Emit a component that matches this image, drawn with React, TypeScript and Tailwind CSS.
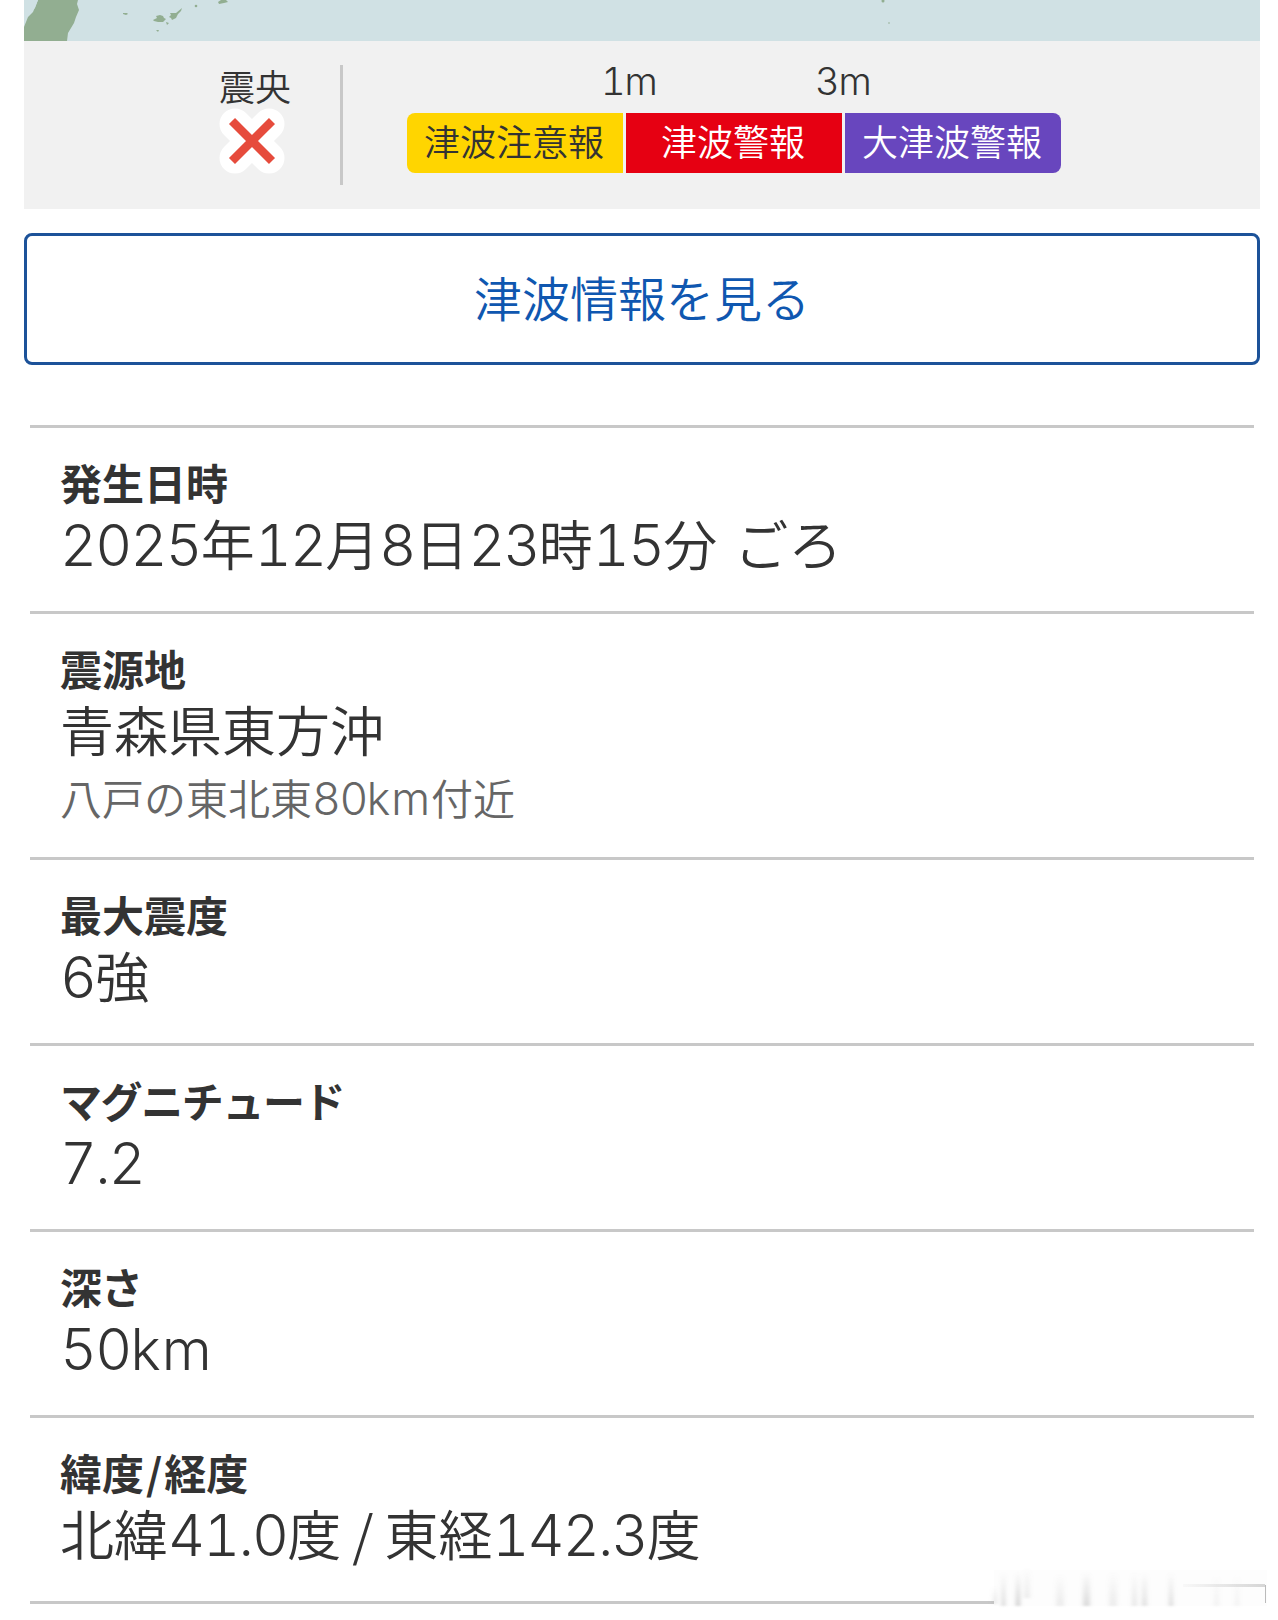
import { ReactNode } from 'react';

interface DetailRowProps {
    label: ReactNode;
    note?: string;
    children: ReactNode;
}

// Latin digits and units are set in a wider face than the kanji around them
function Num({ children }: { children: ReactNode }) {
    return (
        <span className="font-[Inter,'Noto_Sans_CJK_JP',sans-serif] text-[1.06em] leading-none font-[350] tracking-[-0.032em] tabular-nums">
            {children}
        </span>
    );
}

function Unit({ children }: { children: ReactNode }) {
    return (
        <span className="font-[Inter,'Noto_Sans_CJK_JP',sans-serif] text-[1.06em] leading-none font-[350] tracking-[0.02em]">
            {children}
        </span>
    );
}

function withNumerals(text: string) {
    return text.split(/([0-9.]+|km)/).map((part, i) => {
        if (i % 2 === 0) return part;
        return part === 'km' ? <Unit key={i}>{part}</Unit> : <Num key={i}>{part}</Num>;
    });
}

function DetailRow({ label, note, children }: DetailRowProps) {
    return (
        <div className={`border-b-3 border-[#c8c8c8] px-[30px] pt-[22px] ${note ? 'h-[246px]' : 'h-[186px]'}`}>
            <dt className="h-[63px] text-[42px] leading-[64px] font-bold">{label}</dt>
            <dd className="h-[60px] text-[54px] leading-[60px] font-[350] whitespace-pre">{children}</dd>
            {note && (
                <dd className="mt-2 h-[60px] text-[42px] leading-[60px] font-[350] text-[#666]">
                    {withNumerals(note)}
                </dd>
            )}
        </div>
    );
}

function MapStrip() {
    return (
        <svg className="block h-[41px] w-full" viewBox="0 0 1236 41">
            <rect width="1236" height="41" fill="#d0e1e4" />
            <path
                d="M0 0V27L4 17L9 12L14 0H54L53 4L55 10L52 17L50 23L47 28L44 33L43 41H0Z"
                fill="#92ae91"
            />
            <path d="M0 0H14L11 8L5 14L0 19Z" fill="#d0e1e4" />
            <g fill="#92ae91">
                <path d="M99 13l4 0l1 1l-2 1l-3-1z" />
                <path d="M129 20l4-2l-1-2l4-1l3 1l1 2l2 1l-3 3l-5 0l-4-1z" />
                <path d="M146 13l6 0l6-5l-1 3l-3 3l-2 4l-4 2l-1-2l-2-1l2-2z" />
                <path d="M142 22l3 1l-2 2z" />
                <path d="M132 30l3 0l-1 2z" />
                <circle cx="172" cy="6" r="1.3" />
                <path d="M194 2l3-2h5l2 2l-4 1l-5 1z" />
                <circle cx="859" cy="1" r="1.5" />
                <circle cx="865" cy="23" r="0.8" />
            </g>
        </svg>
    );
}

function EpicenterMark() {
    return (
        <svg className="mr-[7px] block size-[66px]" viewBox="0 0 66 66">
            <path d="M16 16L50 50M50 16L16 50" stroke="#fff" strokeWidth="31" strokeLinecap="round" />
            <path d="M13 13L53 53M53 13L13 53" stroke="#e64b3c" strokeWidth="8.5" />
        </svg>
    );
}

function Legend() {
    return (
        <div className="flex h-[168px] bg-[#f1f1f1] pt-6">
            <div className="ml-[194px] flex w-[74px] flex-col items-center text-[36px] leading-[40px] font-[350] whitespace-nowrap">
                <span className="mb-[3px]">震央</span>
                <EpicenterMark />
            </div>
            <div className="ml-[48px] h-[120px] w-[3px] bg-[#c8c8c8]" />
            <div className="ml-16 w-[654px] font-[350]">
                <div className="-mt-[3px] flex h-[51px] text-[36px] leading-[26px]">
                    <span className="ml-[194px] w-[57px]">
                        <Num>1</Num>
                        <Unit>m</Unit>
                    </span>
                    <span className="ml-[157px]">
                        <Num>3</Num>
                        <Unit>m</Unit>
                    </span>
                </div>
                <div className="flex gap-[3px] text-center text-[36px] leading-[54px]">
                    <div className="h-[60px] w-[216px] rounded-l-lg bg-[#ffd500] pr-0.5">津波注意報</div>
                    <div className="h-[60px] w-[216px] bg-[#e60012] pr-0.5 text-white">津波警報</div>
                    <div className="h-[60px] w-[216px] rounded-r-lg bg-[#6846be] pr-0.5 text-white">大津波警報</div>
                </div>
            </div>
        </div>
    );
}

// Faded stamp in the lower right corner
function Watermark() {
    return (
        <svg className="absolute top-[1560px] left-[988px] h-[50px] w-[282px]" viewBox="0 0 282 50">
            <defs>
                <linearGradient id="smear" x1="0" y1="0" x2="0" y2="1">
                    <stop offset="0" stopColor="#999" stopOpacity="0" />
                    <stop offset="1" stopColor="#999" stopOpacity="0.5" />
                </linearGradient>
                <linearGradient id="edge" x1="0" y1="0" x2="1" y2="0">
                    <stop offset="0" stopColor="#ccc" stopOpacity="0.1" />
                    <stop offset="1" stopColor="#ccc" stopOpacity="0.8" />
                </linearGradient>
                <filter id="soft" x="-20%" y="-20%" width="140%" height="140%">
                    <feGaussianBlur stdDeviation="2 1" />
                </filter>
            </defs>
            <rect x="6" y="10" width="273" height="36" fill="#fdfdfd" />
            <g fill="url(#smear)" filter="url(#soft)">
                <rect x="5" y="26" width="4" height="18" opacity="0.5" />
                <rect x="14" y="12" width="3" height="34" opacity="0.9" />
                <rect x="28" y="12" width="4" height="34" />
                <rect x="36" y="8" width="6" height="30" opacity="0.35" />
                <rect x="68" y="14" width="8" height="32" opacity="0.35" />
                <rect x="95" y="12" width="7" height="34" opacity="0.7" />
                <rect x="121" y="12" width="8" height="34" opacity="0.35" />
                <rect x="144" y="12" width="5" height="34" opacity="0.45" />
                <rect x="154" y="12" width="5" height="34" opacity="0.6" />
                <rect x="181" y="12" width="4" height="34" opacity="0.7" />
                <rect x="226" y="14" width="5" height="32" opacity="0.25" />
                <rect x="247" y="14" width="4" height="32" opacity="0.25" />
            </g>
            <rect x="195" y="24" width="82" height="3" fill="url(#edge)" />
            <path d="M277.500 25V43" stroke="#bbb" strokeWidth="1" />
        </svg>
    );
}

export default function App() {
    return (
        <div className="relative h-[1620px] w-[1278px] overflow-hidden bg-white pr-[18px] pl-6 font-['Noto_Sans_CJK_JP',sans-serif] text-[#333]">
            <MapStrip />
            <Legend />

            <button
                type="button"
                className="mt-6 block h-[132px] w-full rounded-lg border-3 border-[#1c5299] pb-[6px] text-[48px] leading-[120px] font-[350] text-[#0f57b0]"
            >
                津波情報を見る
            </button>

            <dl className="mx-1.5 mt-[60px] border-t-3 border-[#c8c8c8]">
                <DetailRow label="発生日時">
                    <span className="[word-spacing:5px]">{withNumerals('2025年12月8日23時15分 ごろ')}</span>
                </DetailRow>
                <DetailRow label="震源地" note="八戸の東北東80km付近">
                    青森県東方沖
                </DetailRow>
                <DetailRow label="最大震度">{withNumerals('6強')}</DetailRow>
                <DetailRow label={<span className="tracking-[-1.4px]">マグニチュード</span>}>
                    {withNumerals('7.2')}
                </DetailRow>
                <DetailRow label={<span className="tracking-[-1px]">深さ</span>}>{withNumerals('50km')}</DetailRow>
                <DetailRow
                    label={
                        <>
                            緯度<span className="px-[2px]">/</span>経度
                        </>
                    }
                >
                    <span className="[word-spacing:-1px]">{withNumerals('北緯41.0度 / 東経142.3度')}</span>
                </DetailRow>
            </dl>

            <Watermark />
        </div>
    );
}
